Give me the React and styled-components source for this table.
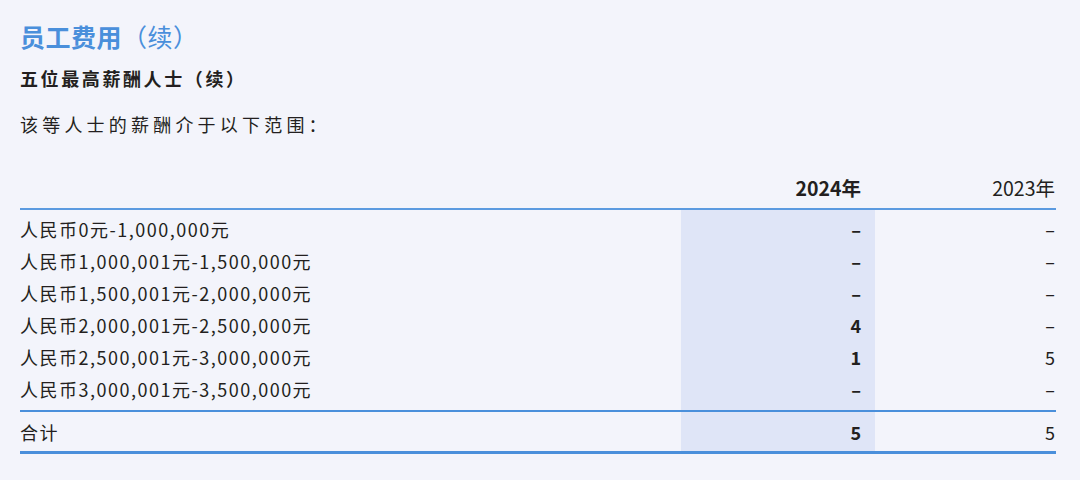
import React from "react";
import styled, { createGlobalStyle } from "styled-components";

const GlobalStyle = createGlobalStyle`
  html, body {
    margin: 0;
    padding: 0;
    background: #f3f4fb;
  }
  body {
    font-family: "Noto Sans CJK SC", "Noto Sans", sans-serif;
    color: #231f20;
  }
`;

const Page = styled.div`
  width: 1036px;
  padding: 16px 0 0 20px;
`;

const Title = styled.h1`
  margin: 0;
  font-size: 25px;
  line-height: 40px;
  font-weight: 700;
  color: #4a8fdb;
  letter-spacing: 0.5px;

  span {
    font-weight: 400;
  }
`;

const Subtitle = styled.h2`
  margin: 0;
  padding-top: 6px;
  font-size: 18px;
  line-height: 32px;
  font-weight: 700;
  letter-spacing: 2.6px;
`;

const Intro = styled.p`
  margin: 0;
  padding-top: 14px;
  font-size: 18px;
  line-height: 32px;
  letter-spacing: 4.2px;
`;

const COLS = "661px 194px 181px";
const SHADE = "#dfe5f7";

const shaded = `
  background: linear-gradient(
    to right,
    transparent 661px,
    ${SHADE} 661px,
    ${SHADE} 855px,
    transparent 855px
  );
`;

const HeaderRow = styled.div`
  display: grid;
  grid-template-columns: ${COLS};
  margin-top: 26px;
  height: 42px;
  align-items: center;
  border-bottom: 2px solid #5b9ae0;
`;

const Body = styled.div`
  padding: 3px 0 5px;
  border-bottom: 2px solid #4a8fdb;
  ${shaded}
`;

const Row = styled.div`
  display: grid;
  grid-template-columns: ${COLS};
  height: ${(p) => (p.$total ? 39 : 32)}px;
  align-items: center;
`;

const TotalBlock = styled.div`
  border-bottom: 3px solid #4a8fdb;
  ${shaded}
`;

const Label = styled.div`
  font-size: 18px;
  letter-spacing: 1.5px;
  white-space: nowrap;
`;

const Num = styled.div`
  font-size: ${(p) => (p.$head ? 19.5 : 18)}px;
  text-align: right;
  padding-right: ${(p) => (p.$current ? 14 : 1)}px;
  font-weight: ${(p) => (p.$current ? 700 : 400)};
`;

const rows = [
  ["人民币0元-1,000,000元", "–", "–"],
  ["人民币1,000,001元-1,500,000元", "–", "–"],
  ["人民币1,500,001元-2,000,000元", "–", "–"],
  ["人民币2,000,001元-2,500,000元", "4", "–"],
  ["人民币2,500,001元-3,000,000元", "1", "5"],
  ["人民币3,000,001元-3,500,000元", "–", "–"],
];

export default function App() {
  return (
    <Page>
      <GlobalStyle />
      <Title>
        员工费用<span>（续）</span>
      </Title>
      <Subtitle>五位最高薪酬人士（续）</Subtitle>
      <Intro>该等人士的薪酬介于以下范围：</Intro>

      <HeaderRow>
        <Label />
        <Num $head $current>2024年</Num>
        <Num $head>2023年</Num>
      </HeaderRow>

      <Body>
        {rows.map(([label, a, b]) => (
          <Row key={label}>
            <Label>{label}</Label>
            <Num $current>{a}</Num>
            <Num>{b}</Num>
          </Row>
        ))}
      </Body>

      <TotalBlock>
        <Row $total>
          <Label>合计</Label>
          <Num $current>5</Num>
          <Num>5</Num>
        </Row>
      </TotalBlock>
    </Page>
  );
}
